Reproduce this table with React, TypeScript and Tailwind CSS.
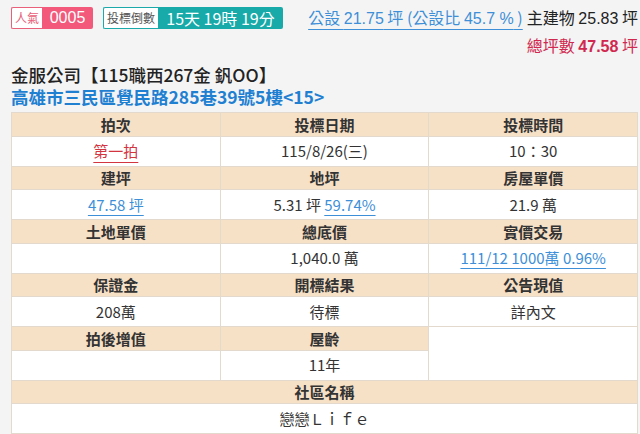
import React from "react"

const cjk = "[font-family:'Noto_Sans_CJK_TC','Noto_Sans',sans-serif]"
const latin = "[font-family:'Liberation_Sans','Noto_Sans_CJK_TC',sans-serif]"

function Head({ children, colSpan }: { children?: React.ReactNode; colSpan?: number }) {
  return (
    <td colSpan={colSpan} className="h-[23.5px] border border-[#e3dacd] bg-[#f6e0c6] p-0 text-center align-middle text-[15px] leading-[21px] font-bold text-[#333]">
      {children}
    </td>
  )
}

function Cell({ children, colSpan }: { children?: React.ReactNode; colSpan?: number }) {
  return (
    <td colSpan={colSpan} className="h-[30px] border border-[#e3dacd] bg-white p-0 text-center align-middle text-[15px] leading-[22px] text-[#333]">
      {children}
    </td>
  )
}

function BlueLink({ children }: { children: React.ReactNode }) {
  return <span className="text-[#3d8fd8] underline decoration-[#3d8fd8] underline-offset-[4px]">{children}</span>
}

export default function App() {
  return (
    <div className={`min-h-[434px] w-[640px] overflow-hidden bg-[#f4f4f4] pl-[11px] pr-[2px] ${cjk}`}>
      <div className="flex items-start pt-[7px]">
        <div className="flex h-[22px] items-stretch">
          <span className="flex w-[31px] items-center justify-center rounded-l-[2px] border border-r-0 border-[#e8607a] bg-white text-[12px] text-[#e8607a]">人氣</span>
          <span className={`flex w-[51px] items-center justify-center rounded-r-[2px] bg-[#f3597a] text-[16px] text-white ${latin}`}>0005</span>
        </div>
        <div className="ml-[10px] flex h-[22px] items-stretch">
          <span className="flex w-[55px] items-center justify-center rounded-l-[2px] border border-r-0 border-[#1ba9a9] bg-white text-[12px] text-[#555]">投標倒數</span>
          <span className="flex w-[125px] items-center justify-center rounded-r-[2px] bg-[#17aaa9] text-[16px] text-white">15天 19時 19分</span>
        </div>
        <div className="ml-auto text-right">
          <div className="flex h-[22px] items-center justify-end text-[16px] whitespace-nowrap">
            <span className={`text-[#3d8fd8] underline decoration-[#3d8fd8] underline-offset-[5px] ${cjk}`}>
              公設 <span className={latin}>21.75</span> 坪 (公設比 <span className={latin}>45.7 %</span> )
            </span>
            <span className="ml-[4px] text-[#222]">
              主建物 <span className={latin}>25.83</span> 坪
            </span>
          </div>
          <div className="mt-[4px] h-[24px] text-[16px] leading-[24px] text-[#d0284f]">
            總坪數 <span className={`font-bold ${latin}`}>47.58</span> 坪
          </div>
        </div>
      </div>

      <div className="mt-[7px] text-[17.5px] leading-[22px] font-medium text-[#222]">金服公司【115職西267金 釩OO】</div>
      <div className="text-[17.5px] leading-[22px] font-bold text-[#1f80d2]">高雄市三民區覺民路285巷39號5樓&lt;15&gt;</div>

      <table className="mt-[4px] w-[627px] table-fixed border-collapse border border-[#a8a39a]">
        <tbody>
          <tr>
            <Head>拍次</Head>
            <Head>投標日期</Head>
            <Head>投標時間</Head>
          </tr>
          <tr>
            <Cell>
              <span className="text-[#d2353f] underline decoration-[#d2353f] underline-offset-[5px]">第一拍</span>
            </Cell>
            <Cell>115/8/26(三)</Cell>
            <Cell>10：30</Cell>
          </tr>
          <tr>
            <Head>建坪</Head>
            <Head>地坪</Head>
            <Head>房屋單價</Head>
          </tr>
          <tr>
            <Cell>
              <BlueLink>47.58 坪</BlueLink>
            </Cell>
            <Cell>
              5.31 坪 <BlueLink>59.74%</BlueLink>
            </Cell>
            <Cell>21.9 萬</Cell>
          </tr>
          <tr>
            <Head>土地單價</Head>
            <Head>總底價</Head>
            <Head>實價交易</Head>
          </tr>
          <tr>
            <Cell />
            <Cell>1,040.0 萬</Cell>
            <Cell>
              <BlueLink>111/12 1000萬 0.96%</BlueLink>
            </Cell>
          </tr>
          <tr>
            <Head>保證金</Head>
            <Head>開標結果</Head>
            <Head>公告現值</Head>
          </tr>
          <tr>
            <Cell>208萬</Cell>
            <Cell>待標</Cell>
            <Cell>詳內文</Cell>
          </tr>
          <tr>
            <Head>拍後增值</Head>
            <Head>屋齡</Head>
            <td rowSpan={2} className="border border-[#e3dacd] bg-white p-0" />
          </tr>
          <tr>
            <Cell />
            <Cell>11年</Cell>
          </tr>
          <tr>
            <Head colSpan={3}>社區名稱</Head>
          </tr>
          <tr>
            <Cell colSpan={3}>戀戀Ｌｉｆｅ</Cell>
          </tr>
        </tbody>
      </table>
    </div>
  )
}
